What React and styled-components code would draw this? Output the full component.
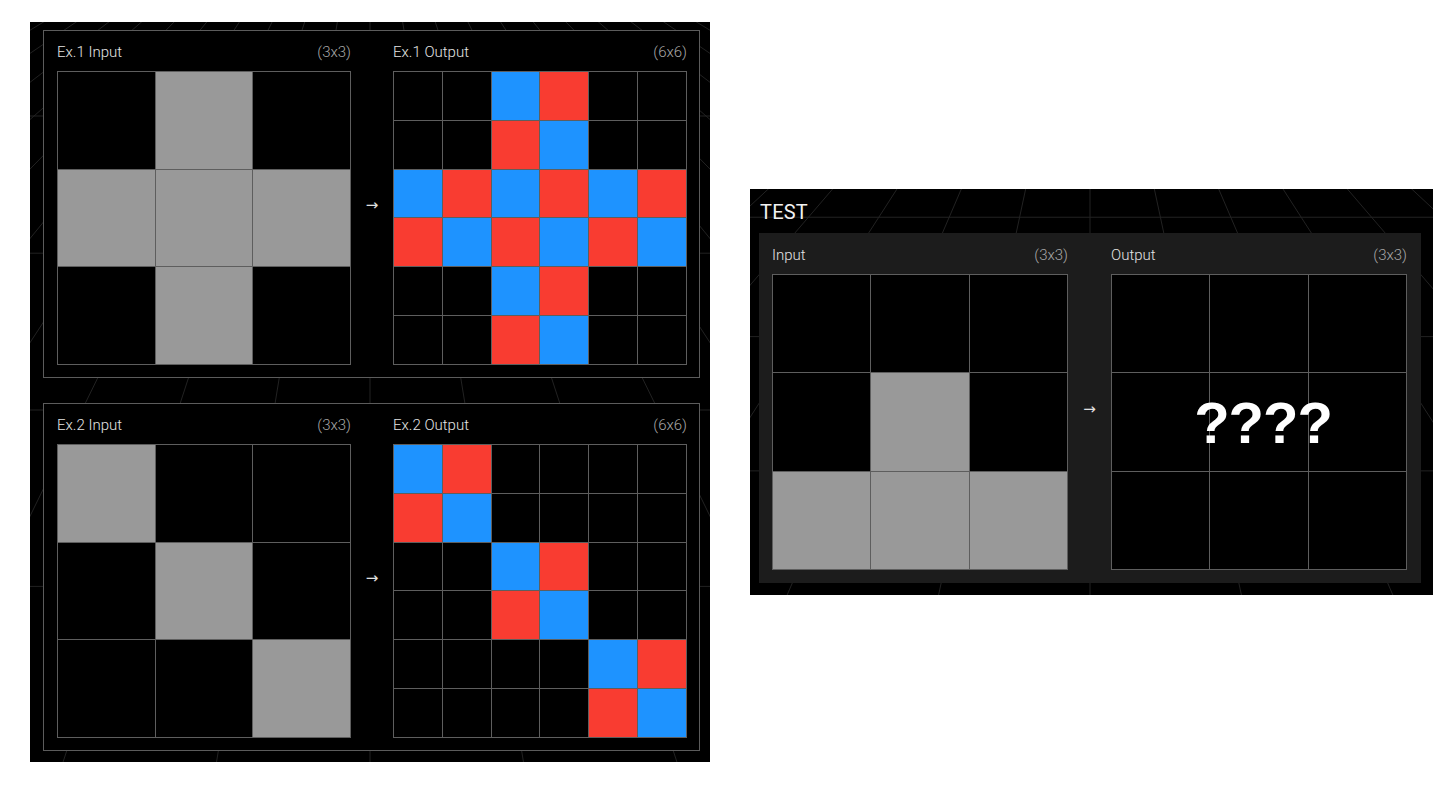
import React from "react";
import styled, { createGlobalStyle } from "styled-components";

const GlobalStyle = createGlobalStyle`
  html, body {
    margin: 0;
    padding: 0;
    background: #ffffff;
  }
  body {
    font-family: Roboto, "Noto Sans", sans-serif;
  }
`;

const COLORS = {
  0: "#000000",
  5: "#999999",
  B: "#1e93ff",
  R: "#f93c31",
};

const examples = [
  {
    id: 1,
    input: ["050", "555", "050"],
    output: ["00BR00", "00RB00", "BRBRBR", "RBRBRB", "00BR00", "00RB00"],
  },
  {
    id: 2,
    input: ["500", "050", "005"],
    output: ["BR0000", "RB0000", "00BR00", "00RB00", "0000BR", "0000RB"],
  },
];

const testInput = ["000", "050", "555"];
const testOutput = ["000", "000", "000"];

const Page = styled.div`
  display: flex;
  align-items: flex-start;
  gap: 40px;
  padding: 22px 0 0 30px;
`;

const ExamplesPanel = styled.div`
  position: relative;
  width: 680px;
  height: 740px;
  box-sizing: border-box;
  background: #000;
  padding: 8px 10px 11px 13px;
  display: flex;
  flex-direction: column;
  gap: 25px;
  overflow: hidden;
`;

const TestPanel = styled.div`
  position: relative;
  margin-top: 167px;
  width: 683px;
  height: 406px;
  box-sizing: border-box;
  background: #000;
  padding: 0 12px 12px 9px;
  display: flex;
  flex-direction: column;
  overflow: hidden;
`;

const Floor = styled.svg`
  position: absolute;
  inset: 0;
  width: 100%;
  height: 100%;
  z-index: 0;
`;

const TestTitle = styled.div`
  position: relative;
  z-index: 1;
  height: 44px;
  padding-left: 1px;
  display: flex;
  align-items: center;
  padding-top: 2px;
  box-sizing: border-box;
  color: #f2f2f2;
  font-size: 20px;
  letter-spacing: 0.2px;
`;

const PairBox = styled.div`
  position: relative;
  z-index: 1;
  display: flex;
  align-items: center;
  box-sizing: border-box;
  background: ${(p) => (p.$test ? "#1c1c1c" : "#000")};
  border: ${(p) => (p.$test ? "none" : "1px solid #5c5c5c")};
  padding: 0 ${(p) => (p.$test ? "14px 13px 13px" : "12px 12px 13px")};
`;

const Column = styled.div`
  display: flex;
  flex-direction: column;
`;

const Header = styled.div`
  display: flex;
  justify-content: space-between;
  align-items: center;
  height: ${(p) => p.$h}px;
  padding-top: 2px;
  box-sizing: border-box;
  font-size: 15px;
  font-weight: 300;
`;

const Label = styled.span`
  color: #e4e4e4;
`;

const Size = styled.span`
  color: #a8a8a8;
`;

const Arrow = styled.div`
  width: ${(p) => p.$w}px;
  text-align: center;
  color: #e0e0e0;
  font-size: 15px;
  padding-top: 14px;
  font-family: "DejaVu Sans", sans-serif;
`;

const Grid = styled.div`
  position: relative;
  width: ${(p) => p.$size}px;
  height: ${(p) => p.$size}px;
  box-sizing: border-box;
  display: grid;
  grid-template-columns: repeat(${(p) => p.$n}, 1fr);
  grid-template-rows: repeat(${(p) => p.$n}, 1fr);
  gap: 1px;
  padding: 1px;
  background: #5e5e5e;
`;

const Cell = styled.div`
  background: ${(p) => COLORS[p.$v]};
`;

const Unknown = styled.div`
  position: absolute;
  inset: 0;
  display: flex;
  align-items: center;
  justify-content: center;
  padding: 0 0 0 8px;
  color: #ffffff;
  font-family: "Liberation Sans", Arial, sans-serif;
  font-weight: 700;
  font-size: 58px;
  letter-spacing: -1px;
`;

const CellGrid = ({ rows, size, children }) => (
  <Grid $n={rows.length} $size={size}>
    {rows.flatMap((row, r) =>
      row.split("").map((v, c) => <Cell key={`${r}-${c}`} $v={v} />)
    )}
    {children}
  </Grid>
);

const GridColumn = ({ label, rows, size, headerHeight, children }) => (
  <Column>
    <Header $h={headerHeight}>
      <Label>{label}</Label>
      <Size>{`(${rows.length}x${rows.length})`}</Size>
    </Header>
    <CellGrid rows={rows} size={size}>
      {children}
    </CellGrid>
  </Column>
);

// faint perspective floor behind the panels
const FloorLines = ({ w, h, cx, cy }) => {
  const lines = [];
  for (let i = -14; i <= 14; i++) {
    lines.push(
      <line key={`r${i}`} x1={cx} y1={cy} x2={cx + i * 160} y2={h + 40} />
    );
  }
  const bands = [0.08, 0.18, 0.3, 0.44, 0.6, 0.78, 1];
  bands.forEach((t, i) => {
    const y = cy + (h + 40 - cy) * t;
    lines.push(<line key={`h${i}`} x1={0} y1={y} x2={w} y2={y} />);
  });
  return (
    <Floor viewBox={`0 0 ${w} ${h}`} preserveAspectRatio="none">
      <g stroke="#222222" strokeWidth="1" fill="none">
        {lines}
      </g>
    </Floor>
  );
};

export default function App() {
  return (
    <>
      <GlobalStyle />
      <Page>
        <ExamplesPanel>
          <FloorLines w={680} h={740} cx={340} cy={-200} />
          {examples.map((ex) => (
            <PairBox key={ex.id}>
              <GridColumn
                label={`Ex.${ex.id} Input`}
                rows={ex.input}
                size={294}
                headerHeight={40}
              />
              <Arrow $w={42}>→</Arrow>
              <GridColumn
                label={`Ex.${ex.id} Output`}
                rows={ex.output}
                size={294}
                headerHeight={40}
              />
            </PairBox>
          ))}
        </ExamplesPanel>

        <TestPanel>
          <FloorLines w={683} h={406} cx={340} cy={-300} />
          <TestTitle>TEST</TestTitle>
          <PairBox $test>
            <GridColumn
              label="Input"
              rows={testInput}
              size={296}
              headerHeight={41}
            />
            <Arrow $w={43}>→</Arrow>
            <GridColumn
              label="Output"
              rows={testOutput}
              size={296}
              headerHeight={41}
            >
              <Unknown>????</Unknown>
            </GridColumn>
          </PairBox>
        </TestPanel>
      </Page>
    </>
  );
}
